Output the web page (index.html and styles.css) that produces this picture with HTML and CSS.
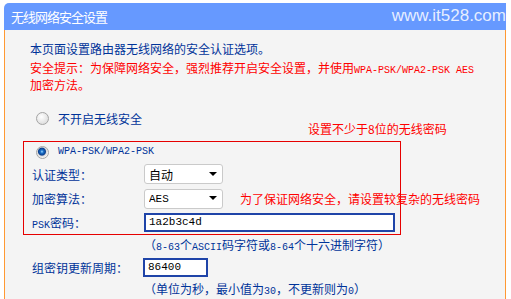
FILE: index.html
```html
<!DOCTYPE html>
<html>
<head>
  <meta charset="UTF-8">
  <meta name="viewport" content="width=device-width, initial-scale=1.0">
  <title>无线网络安全设置</title>
  <link rel="stylesheet" href="styles.css">
</head>
<body>
  <div class="panel">
    <div class="panel-head">
      <span class="title">无线网络安全设置</span>
      <span class="mark">www.it528.com</span>
    </div>

    <div class="panel-body">
      <p class="intro">本页面设置路由器无线网络的安全认证选项。</p>
      <p class="warn">安全提示：为保障网络安全，强烈推荐开启安全设置，并使用<span class="en">WPA-PSK/WPA2-PSK AES</span><br>加密方法。</p>

      <div class="form">
        <label class="radio-row">
          <input type="radio" name="sec" class="radio">
          <span>不开启无线安全</span>
        </label>
        <div class="tip tip-top">设置不少于8位的无线密码</div>

        <!-- WPA block, outlined in red -->
        <div class="psk-box">
          <label class="radio-row in-box">
            <input type="radio" name="sec" class="radio" checked>
            <span class="en">WPA-PSK/WPA2-PSK</span>
          </label>
          <div class="row">
            <span class="label">认证类型：</span>
            <div class="select-wrap"><select><option>自动</option></select></div>
          </div>
          <div class="row">
            <span class="label">加密算法：</span>
            <div class="select-wrap"><select class="en-select"><option>AES</option></select></div>
            <span class="tip tip-side">为了保证网络安全，请设置较复杂的无线密码</span>
          </div>
          <div class="row">
            <span class="label"><span class="en">PSK</span>密码：</span>
            <input type="text" class="text psk" value="1a2b3c4d">
          </div>
        </div>

        <div class="hint">（<span class="en">8-63</span>个<span class="en">ASCII</span>码字符或<span class="en">8-64</span>个十六进制字符）</div>
        <div class="row">
          <span class="label">组密钥更新周期：</span>
          <input type="text" class="text period" value="86400">
        </div>
        <div class="hint">（单位为秒，最小值为<span class="en">30</span>，不更新则为<span class="en">0</span>）</div>
      </div>
    </div>
  </div>
</body>
</html>
```

FILE: styles.css
```css
body {
  margin: 0;
  background-color: #ffffff;
  font-family: "Noto Sans CJK SC", sans-serif;
  font-size: 12px;
  color: #003399;
}

p {
  margin: 0;
}

.en {
  font-family: "Liberation Mono", monospace;
  font-size: 10px;
  line-height: 1;
}

.panel {
  width: 502px;
  margin: 3px 0 0 4px;
}

.panel-head {
  height: 27px;
  background-color: #6699ff;
  border-radius: 5px 0 0 0;
  display: flex;
  align-items: center;
  justify-content: space-between;
  padding-left: 7px;
  color: #ffffff;
}

.title {
  font-size: 13px;
  letter-spacing: -1px;
}

.mark {
  font-family: "Liberation Sans", sans-serif;
  font-size: 17px;
  color: rgba(255, 255, 255, 0.85);
  margin-top: -2px;
}

.panel-body {
  height: 269px;
  box-sizing: border-box;
  overflow: hidden;
  background-color: #f4f4f4;
  border-left: 1px solid #ff9933;
  border-right: 1px solid #ff9933;
  padding-top: 10px;
}

.intro,
.warn {
  margin-left: 25px;
  line-height: 17px;
}

.warn {
  margin-top: 2px;
  color: #ff0000;
}

.form {
  padding-left: 27px;
}

.radio-row {
  display: flex;
  align-items: center;
  height: 16px;
  margin-top: 17px;
}

.radio-row.in-box {
  height: 20px;
  margin-top: 0;
}

.radio {
  appearance: none;
  -webkit-appearance: none;
  width: 13px;
  height: 13px;
  margin: 0 9px 0 4px;
  border-radius: 50%;
  border: 1px solid #a4a4a4;
  background: radial-gradient(circle at 40% 35%, #ffffff, #d4d4d4);
}

.radio:checked {
  background: radial-gradient(circle at 45% 42%, #a8dcff 0, #1c74cc 1.5px, #0b3f8e 3.5px, #dcdcdc 4.5px, #f2f2f2 6px);
}

.tip {
  color: #ff0000;
  white-space: nowrap;
}

.tip-top {
  margin: -3px 0 0 276px;
  line-height: 12px;
}

.psk-box {
  width: 378px;
  box-sizing: border-box;
  margin: 6px 0 0 -9px;
  padding-left: 8px;
  border: 1px solid #e60000;
}

.row {
  display: flex;
  align-items: center;
  height: 24px;
  white-space: nowrap;
}

.label {
  width: 112px;
  flex-shrink: 0;
}

.select-wrap {
  position: relative;
  width: 79px;
  height: 20px;
  flex-shrink: 0;
}

.select-wrap::after {
  content: '';
  position: absolute;
  right: 6px;
  top: 8px;
  border-left: 4px solid transparent;
  border-right: 4px solid transparent;
  border-top: 4px solid #000000;
  pointer-events: none;
}

select {
  appearance: none;
  -webkit-appearance: none;
  width: 100%;
  height: 100%;
  margin: 0;
  padding: 0 0 0 4px;
  border: 1px solid #cacaca;
  border-radius: 3px;
  background-color: #ffffff;
  color: #000000;
  font-family: "Noto Sans CJK SC", sans-serif;
  font-size: 12px;
}

select.en-select {
  font-family: "Liberation Mono", monospace;
  font-size: 11px;
}

.tip-side {
  margin-left: 17px;
  flex-shrink: 0;
}

.text {
  box-sizing: border-box;
  height: 19px;
  margin: 0;
  padding: 0 3px;
  border: 2px solid #1f44a8;
  background-color: #ffffff;
  color: #000000;
  font-family: "Liberation Mono", monospace;
  font-size: 11px;
}

.psk {
  width: 251px;
}

.period {
  width: 65px;
  margin-left: -1px;
}

.hint {
  margin-left: 112px;
  line-height: 20px;
}
```
